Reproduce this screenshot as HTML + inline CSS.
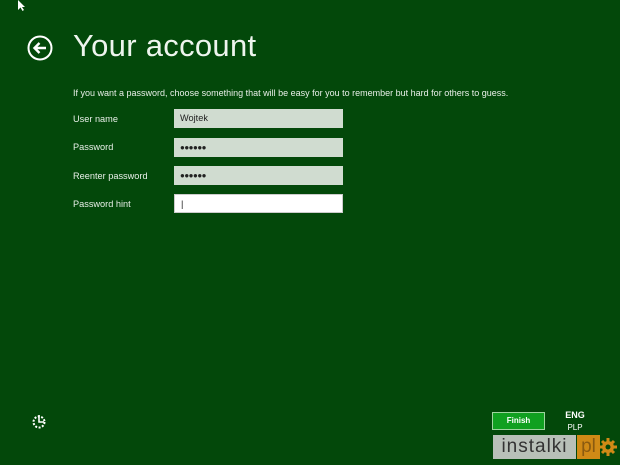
<!DOCTYPE html>
<html><head><style>
body{margin:0;width:620px;height:465px;background:#03480a;position:relative;overflow:hidden;font-family:"Liberation Sans",sans-serif;color:#fff}
.a{position:absolute}
.lbl{position:absolute;left:73px;font-size:9.2px;color:#e8efe8}
.in{position:absolute;left:174px;width:169px;height:19px;background:#d0dcd0;border:0;color:#222;font-size:9.2px;line-height:19px;padding-left:6px;box-sizing:border-box}
.dots{font-size:8px;letter-spacing:-0.5px}
</style></head><body>
<svg class="a" style="left:18px;top:0" width="8" height="12"><path d="M0,0 L0,10 L2.5,7.5 L4.5,11 L6,10 L4,7 L7,7 Z" fill="#fff"/></svg>
<svg class="a" style="left:27px;top:35px" width="26" height="26"><circle cx="13" cy="13" r="11.5" fill="none" stroke="#fff" stroke-width="2"/><path d="M19,13 H8 M12.5,8 L7.5,13 L12.5,18" fill="none" stroke="#fff" stroke-width="2.4"/></svg>
<div class="a" style="left:73px;top:28px;font-size:31px;font-weight:300;color:#eef5ee;letter-spacing:0.3px">Your account</div>
<div class="a" style="left:73px;top:88px;font-size:9px;color:#e8efe8">If you want a password, choose something that will be easy for you to remember but hard for others to guess.</div>
<div class="lbl" style="top:114px">User name</div><div class="in" style="top:109px">Wojtek</div>
<div class="lbl" style="top:142px">Password</div><div class="in dots" style="top:138px">●●●●●●</div>
<div class="lbl" style="top:171px">Reenter password</div><div class="in dots" style="top:166px">●●●●●●</div>
<div class="lbl" style="top:199px">Password hint</div><div class="in" style="top:194px;background:#fff;border:1px solid #ccc">|</div>
<svg class="a" style="left:30px;top:412px" width="18" height="18"><circle cx="9" cy="10" r="5.5" fill="none" stroke="#fff" stroke-width="2" stroke-dasharray="2 1.5"/><path d="M9,3 V10 H14" fill="none" stroke="#fff" stroke-width="1.6"/></svg>
<div class="a" style="left:492px;top:412px;width:53px;height:18px;background:#10a020;border:1px solid #9ed49e;box-sizing:border-box;font-size:8px;font-weight:bold;text-align:center;line-height:16px">Finish</div>
<div class="a" style="left:560px;top:410px;width:30px;text-align:center;font-size:9px;font-weight:bold">ENG</div>
<div class="a" style="left:560px;top:423px;width:30px;text-align:center;font-size:8px">PLP</div>
<div class="a" style="left:493px;top:435px;width:83px;height:24px;background:#b8c0b8;color:#333;font-size:19px;line-height:24px;text-align:center;letter-spacing:1px">instalki</div>
<div class="a" style="left:577px;top:435px;width:23px;height:24px;background:#d08a16;color:#8a5a10;font-size:19px;line-height:24px;text-align:center">pl</div>
<svg class="a" style="left:599px;top:437px" width="19" height="20"><path d="M9,1V19M0,10H18M3,4L15,16M15,4L3,16" stroke="#d08a16" stroke-width="3"/><circle cx="9" cy="10" r="6" fill="#d08a16"/><circle cx="9" cy="10" r="2.5" fill="#03480a"/></svg>
</body></html>
